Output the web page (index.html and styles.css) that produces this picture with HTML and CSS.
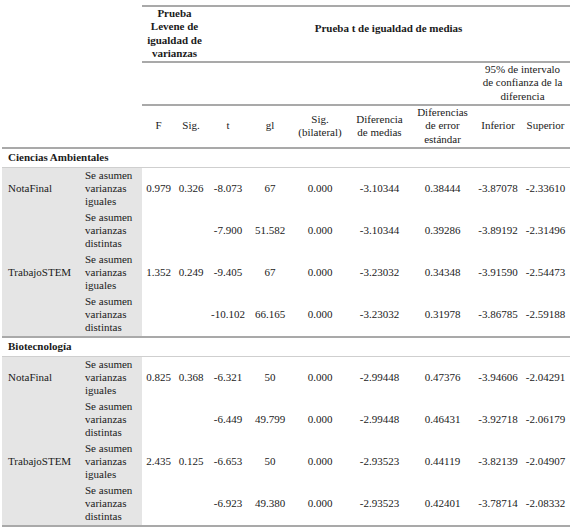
FILE: index.html
```html
<!DOCTYPE html>
<html lang="es">
<head>
<meta charset="utf-8">
<link rel="stylesheet" href="styles.css">
</head>
<body>
<table class="tt">
  <colgroup>
    <col class="w80"><col class="w60"><col class="w33"><col class="w32"><col class="w42"><col class="w42"><col class="w58"><col class="w61"><col class="w65"><col class="w46"><col class="w49">
  </colgroup>
  <thead>
    <tr class="h1">
      <th class="blank" colspan="2" rowspan="3"></th>
      <th class="bold line" colspan="2">Prueba Levene de igualdad de varianzas</th>
      <th class="bold line pt" colspan="7">Prueba t de igualdad de medias</th>
    </tr>
    <tr class="h2">
      <th class="line" colspan="7"></th>
      <th class="line ci" colspan="2">95% de intervalo de confianza de la diferencia</th>
    </tr>
    <tr class="h3">
      <th>F</th><th>Sig.</th><th>t</th><th>gl</th><th>Sig. (bilateral)</th><th>Diferencia de medias</th><th>Diferencias de error estándar</th><th>Inferior</th><th>Superior</th>
    </tr>
  </thead>
  <tbody>
    <tr class="grp"><td colspan="11">Ciencias Ambientales</td></tr>
    <tr class="row"><td class="var">NotaFinal</td><td class="as">Se asumen varianzas iguales</td><td>0.979</td><td>0.326</td><td>-8.073</td><td>67</td><td>0.000</td><td>-3.10344</td><td>0.38444</td><td>-3.87078</td><td>-2.33610</td></tr>
    <tr class="row"><td class="var"></td><td class="as">Se asumen varianzas distintas</td><td></td><td></td><td>-7.900</td><td>51.582</td><td>0.000</td><td>-3.10344</td><td>0.39286</td><td>-3.89192</td><td>-2.31496</td></tr>
    <tr class="row"><td class="var">TrabajoSTEM</td><td class="as">Se asumen varianzas iguales</td><td>1.352</td><td>0.249</td><td>-9.405</td><td>67</td><td>0.000</td><td>-3.23032</td><td>0.34348</td><td>-3.91590</td><td>-2.54473</td></tr>
    <tr class="row last"><td class="var"></td><td class="as">Se asumen varianzas distintas</td><td></td><td></td><td>-10.102</td><td>66.165</td><td>0.000</td><td>-3.23032</td><td>0.31978</td><td>-3.86785</td><td>-2.59188</td></tr>
    <tr class="grp"><td colspan="11">Biotecnología</td></tr>
    <tr class="row"><td class="var">NotaFinal</td><td class="as">Se asumen varianzas iguales</td><td>0.825</td><td>0.368</td><td>-6.321</td><td>50</td><td>0.000</td><td>-2.99448</td><td>0.47376</td><td>-3.94606</td><td>-2.04291</td></tr>
    <tr class="row"><td class="var"></td><td class="as">Se asumen varianzas distintas</td><td></td><td></td><td>-6.449</td><td>49.799</td><td>0.000</td><td>-2.99448</td><td>0.46431</td><td>-3.92718</td><td>-2.06179</td></tr>
    <tr class="row"><td class="var">TrabajoSTEM</td><td class="as">Se asumen varianzas iguales</td><td>2.435</td><td>0.125</td><td>-6.653</td><td>50</td><td>0.000</td><td>-2.93523</td><td>0.44119</td><td>-3.82139</td><td>-2.04907</td></tr>
    <tr class="row last"><td class="var"></td><td class="as">Se asumen varianzas distintas</td><td></td><td></td><td>-6.923</td><td>49.380</td><td>0.000</td><td>-2.93523</td><td>0.42401</td><td>-3.78714</td><td>-2.08332</td></tr>
  </tbody>
</table>
</body>
</html>
```

FILE: styles.css
```css
html, body {
  margin: 0;
  padding: 0;
  background: #ffffff;
}
body {
  padding: 5px 0 0 2px;
  font-family: "Liberation Serif", "DejaVu Serif", serif;
  font-size: 11px;
  line-height: 13.4px;
  color: #1a1a1a;
}
.tt {
  border-collapse: collapse;
  table-layout: fixed;
  width: 568px;
}
.w80 { width: 80px; }
.w60 { width: 60px; }
.w33 { width: 33px; }
.w32 { width: 32px; }
.w42 { width: 42px; }
.w58 { width: 58px; }
.w61 { width: 61px; }
.w65 { width: 65px; }
.w46 { width: 46px; }
.w49 { width: 49px; }

th, td {
  padding: 0;
  text-align: center;
  vertical-align: middle;
  font-weight: normal;
}
thead th { padding: 0 3px; }
thead .h1 th { border-top: 2px solid #a9a9a9; height: 53px; }
thead .h1 th.blank { border-top: none; border-bottom: 2px solid #a9a9a9; }
th.line { border-bottom: 2px solid #a9a9a9; }
th.bold { font-weight: bold; }
thead .h1 th.pt { padding-bottom: 10px; height: 43px; }
thead .h2 th { height: 41px; }
thead .h2 th.ci { padding: 0 6px; }
thead .h3 th { height: 41px; border-bottom: 2px solid #a9a9a9; }

.grp td {
  text-align: left;
  font-weight: bold;
  padding-left: 6px;
  height: 18px;
  border-bottom: 1px solid #cfcfcf;
}
.row td { height: 42px; }
.row.last td { border-bottom: 2px solid #a9a9a9; }
.row td.var {
  background: #e5e5e5;
  text-align: left;
  padding-left: 6px;
}
.row td.as {
  background: #e5e5e5;
  text-align: left;
  padding-left: 3px;
}
```
